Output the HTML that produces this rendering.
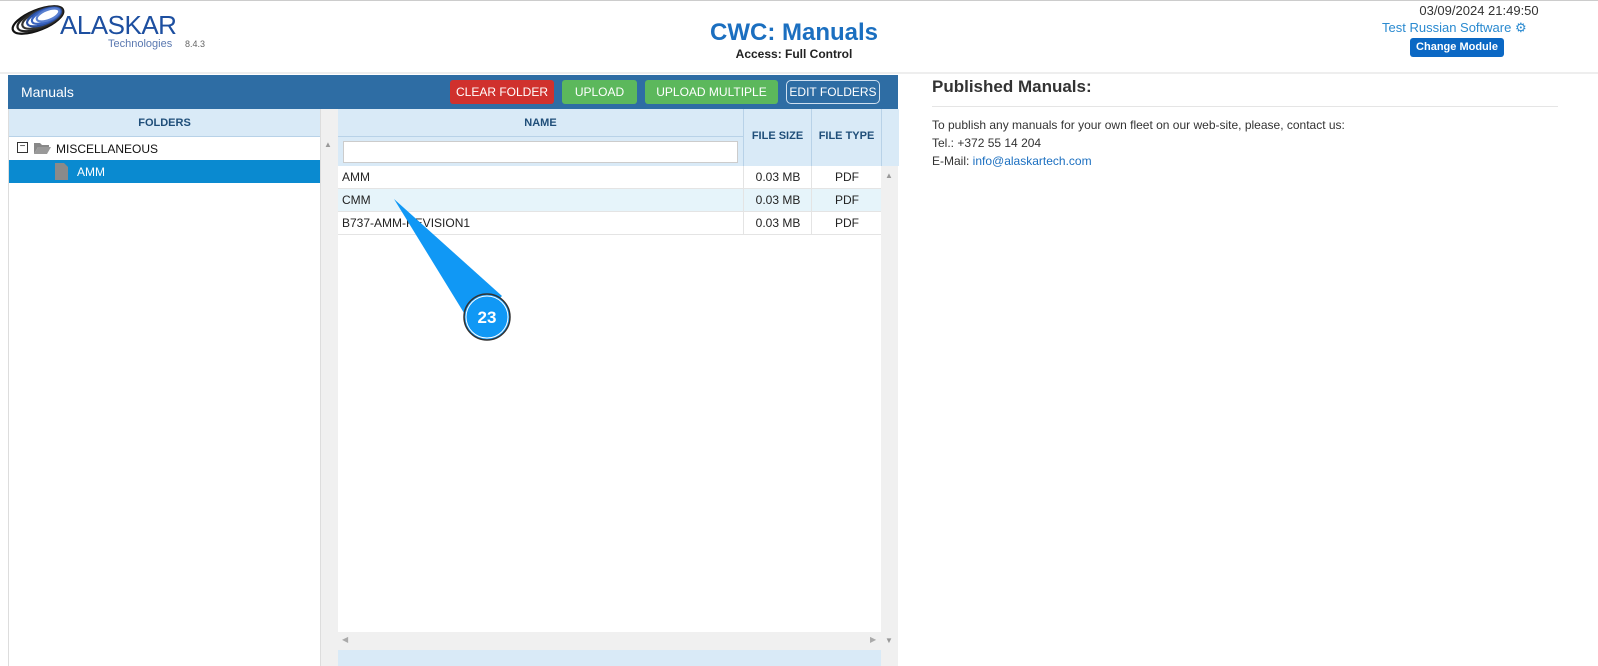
<!DOCTYPE html>
<html><head><style>
body{margin:0;width:1598px;height:666px;overflow:hidden;background:#fff;font-family:"Liberation Sans",Arial,sans-serif;font-size:12px;color:#222;position:relative}
.a{position:absolute}
.btn{position:absolute;top:80px;height:24px;line-height:24px;color:#fff;font-size:12px;text-align:center;border-radius:3px}
.hd{background:#d9eaf7;color:#1f4e79;font-weight:bold;font-size:11px;text-align:center}
</style></head><body>
<div class="a" style="left:0;top:0;width:1598px;height:1px;background:#ccc"></div>
<svg class="a" style="left:10px;top:3px" width="56" height="34" viewBox="0 0 56 34">
<g fill="none" stroke-width="2.2">
<ellipse cx="28" cy="17" rx="27" ry="10" transform="rotate(-22 28 17)" stroke="#111"/>
<ellipse cx="30" cy="16" rx="24" ry="9" transform="rotate(-22 30 16)" stroke="#222"/>
<ellipse cx="32" cy="15" rx="21" ry="8" transform="rotate(-22 32 15)" stroke="#333"/>
<ellipse cx="34" cy="14" rx="18" ry="7" transform="rotate(-22 34 14)" stroke="#2a4fa0"/>
<ellipse cx="36" cy="13" rx="15" ry="6" transform="rotate(-22 36 13)" stroke="#3a63c0"/>
<ellipse cx="38" cy="12" rx="12" ry="5" transform="rotate(-22 38 12)" stroke="#5a80d0"/>
</g></svg>
<div class="a" style="left:60px;top:10px;font-size:26px;color:#1d4fa0;letter-spacing:-0.5px">ALASKAR</div>
<div class="a" style="left:108px;top:38px;font-size:11px;color:#5a78b0">Technologies</div>
<div class="a" style="left:185px;top:39px;font-size:9px;color:#666">8.4.3</div>
<div class="a" style="left:0;width:1588px;top:19px;text-align:center;font-size:24px;font-weight:bold;color:#1b6fc0">CWC: Manuals</div>
<div class="a" style="left:0;width:1588px;top:47px;text-align:center;font-size:12px;font-weight:bold;color:#222">Access: Full Control</div>
<div class="a" style="left:1360px;width:238px;top:3px;text-align:center;font-size:13px;color:#333">03/09/2024 21:49:50</div>
<div class="a" style="left:1382px;top:20px;font-size:13px;color:#2a8ad0">Test Russian Software <span style="font-size:13px">⚙</span></div>
<div class="a" style="left:1410px;top:38px;width:94px;height:19px;background:#0b68c4;border-radius:3px;color:#fff;font-weight:bold;font-size:11px;text-align:center;line-height:19px">Change Module</div>
<div class="a" style="left:0;top:72px;width:1598px;height:2px;background:#eee"></div>

<div class="a" style="left:8px;top:75px;width:890px;height:34px;background:#2e6da4"></div>
<div class="a" style="left:21px;top:84px;color:#fff;font-size:14px">Manuals</div>
<div class="btn" style="left:450px;width:104px;background:#d0312d">CLEAR FOLDER</div>
<div class="btn" style="left:562px;width:75px;background:#5cb85c">UPLOAD</div>
<div class="btn" style="left:645px;width:133px;background:#5cb85c">UPLOAD MULTIPLE</div>
<div class="btn" style="left:786px;width:92px;height:22px;line-height:22px;border:1px solid #cfe0f0;border-radius:5px">EDIT FOLDERS</div>

<div class="a" style="left:8px;top:109px;width:890px;height:557px;background:#fff;border-left:1px solid #ddd;box-sizing:border-box"></div>
<div class="a hd" style="left:9px;top:109px;width:311px;height:28px;line-height:28px;border-bottom:1px solid #b8d2e8;box-sizing:border-box">FOLDERS</div>
<div class="a" style="left:320px;top:109px;width:17px;height:557px;background:#f0f0f0;border-left:1px solid #ddd"></div>
<div class="a" style="left:324px;top:140px;font-size:8px;color:#999">▲</div>
<div class="a" style="left:17px;top:142px;width:9px;height:9px;border:1px solid #333;font-size:10px;line-height:8px;text-align:center">−</div>
<svg class="a" style="left:34px;top:142px" width="17" height="12"><path d="M0 1h6l2 2h7v2H4L0 12z" fill="#888"/><path d="M4 5h13l-4 7H0z" fill="#999"/></svg>
<div class="a" style="left:56px;top:142px;font-size:12px;color:#111">MISCELLANEOUS</div>
<div class="a" style="left:9px;top:160px;width:311px;height:23px;background:#0a8ad0"></div>
<svg class="a" style="left:55px;top:163px" width="13" height="17"><path d="M0 0h9l4 4v13H0z" fill="#8a8a8a"/></svg>
<div class="a" style="left:77px;top:165px;color:#fff;font-size:12px">AMM</div>

<div class="a hd" style="left:338px;top:109px;width:405px;height:28px;line-height:28px;border-bottom:1px solid #b8d2e8;box-sizing:border-box">NAME</div>
<div class="a" style="left:338px;top:137px;width:405px;height:29px;background:#d9eaf7"></div>
<div class="a" style="left:343px;top:141px;width:393px;height:20px;background:#fff;border:1px solid #ccc"></div>
<div class="a hd" style="left:743px;top:109px;width:68px;height:57px;line-height:54px;border-left:1px solid #b8d2e8;box-sizing:border-box">FILE SIZE</div>
<div class="a hd" style="left:811px;top:109px;width:70px;height:57px;line-height:54px;border-left:1px solid #b8d2e8;box-sizing:border-box">FILE TYPE</div>
<div class="a" style="left:881px;top:109px;width:17px;height:57px;background:#d9eaf7;border-left:1px solid #b8d2e8"></div>
<div class="a" style="left:881px;top:166px;width:17px;height:500px;background:#f0f0f0"></div>
<div class="a" style="left:885px;top:171px;font-size:8px;color:#999">▲</div>
<div class="a" style="left:885px;top:636px;font-size:8px;color:#999">▼</div>
<div class="a" style="left:338px;top:632px;width:543px;height:18px;background:#f0f0f0"></div>
<div class="a" style="left:342px;top:635px;font-size:8px;color:#aaa">◀</div>
<div class="a" style="left:870px;top:635px;font-size:8px;color:#aaa">▶</div>
<div class="a" style="left:338px;top:650px;width:543px;height:16px;background:#d9eaf7"></div>

<div class="a" style="left:338px;top:166px;width:543px;height:69px">
<div style="height:22px;border-bottom:1px solid #e4e4e4;position:relative;line-height:22px"><span style="position:absolute;left:4px">AMM</span><span style="position:absolute;left:405px;width:68px;text-align:center;border-left:1px solid #e4e4e4">0.03 MB</span><span style="position:absolute;left:473px;width:70px;text-align:center;border-left:1px solid #e4e4e4">PDF</span></div>
<div style="height:22px;border-bottom:1px solid #e4e4e4;position:relative;line-height:22px;background:#e6f4fa"><span style="position:absolute;left:4px">CMM</span><span style="position:absolute;left:405px;width:68px;text-align:center;border-left:1px solid #e4e4e4">0.03 MB</span><span style="position:absolute;left:473px;width:70px;text-align:center;border-left:1px solid #e4e4e4">PDF</span></div>
<div style="height:22px;border-bottom:1px solid #e4e4e4;position:relative;line-height:22px"><span style="position:absolute;left:4px">B737-AMM-REVISION1</span><span style="position:absolute;left:405px;width:68px;text-align:center;border-left:1px solid #e4e4e4">0.03 MB</span><span style="position:absolute;left:473px;width:70px;text-align:center;border-left:1px solid #e4e4e4">PDF</span></div>
</div>

<svg class="a" style="left:380px;top:190px" width="150" height="160">
<path d="M14 9 L122 106 L92 136 Z" fill="#1098f5"/>
<circle cx="107" cy="127" r="23" fill="#1098f5" stroke="#333" stroke-width="1.5"/>
<circle cx="107" cy="127" r="21" fill="none" stroke="#fff" stroke-width="1"/>
<text x="107" y="133" text-anchor="middle" font-family="Liberation Sans" font-weight="bold" font-size="17" fill="#fff">23</text>
</svg>

<div class="a" style="left:932px;top:77px;font-size:17px;font-weight:bold;color:#333">Published Manuals:</div>
<div class="a" style="left:932px;top:106px;width:626px;height:1px;background:#e5e5e5"></div>
<div class="a" style="left:932px;top:116px;font-size:12px;color:#333;line-height:18px">To publish any manuals for your own fleet on our web-site, please, contact us:<br>Tel.: +372 55 14 204<br>E-Mail: <span style="color:#1b6fc0">info@alaskartech.com</span></div>
</body></html>
